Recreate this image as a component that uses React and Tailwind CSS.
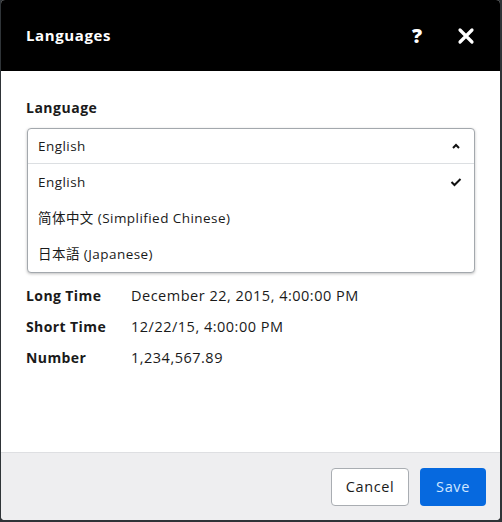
import React from 'react';

const font = { fontFamily: '"Open Sans", "Noto Sans CJK SC", sans-serif' };

const options = [
  { label: 'English', selected: true },
  { label: '简体中文 (Simplified Chinese)' },
  { label: '日本語 (Japanese)' },
];

const details = [
  ['Long Time', 'December 22, 2015, 4:00:00 PM'],
  ['Short Time', '12/22/15, 4:00:00 PM'],
  ['Number', '1,234,567.89'],
];

export default function App() {
  return (
    <div className="w-[502px] h-[522px] bg-[#2f3438] pl-[1px] pr-[2px] pb-[2px]" style={font}>
      <div className="flex flex-col h-full rounded-[4px] overflow-hidden bg-white">
        {/* Header */}
        <div className="h-[71px] shrink-0 bg-black flex items-center pl-[25px] pr-[22px]">
          <h2 className="text-white text-[15px] font-bold tracking-[0.6px] flex-1">Languages</h2>
          <button className="text-white text-[20px] font-extrabold leading-none w-[24px] mr-[25px]" aria-label="Help">?</button>
          <button className="text-white w-[24px] h-[24px] flex items-center justify-center" aria-label="Close">
            <svg width="18" height="18" viewBox="0 0 18 18">
              <path d="M3 3 L15 15 M15 3 L3 15" stroke="white" strokeWidth="3.2" strokeLinecap="round" />
            </svg>
          </button>
        </div>

        {/* Body */}
        <div className="flex-1 px-[25px] pt-[28px] text-[#1a1a1a]">
          <label className="block text-[14px] font-bold tracking-[0.5px] leading-[18px] mb-[11px]">Language</label>
          <div className="ml-[1px] border border-[#a3a8ad] rounded-[4px] shadow-[0_1px_3px_rgba(0,0,0,0.25)] bg-white">
            <div className="h-[35px] flex items-center pl-[10px] pr-[11px] border-b border-[#dcdfe2] text-[13.5px] tracking-[0.45px]">
              <span className="flex-1">English</span>
              <svg width="10" height="8" viewBox="0 0 10 8" className="mr-[2px]">
                <path d="M2 6 L5 3 L8 6" fill="none" stroke="#111" strokeWidth="2" />
              </svg>
            </div>
            {options.map((o) => (
              <div key={o.label} className="h-[36px] flex items-center pl-[10px] pr-[11px] text-[13.5px] tracking-[0.45px]">
                <span className="flex-1">{o.label}</span>
                {o.selected && (
                  <svg width="12" height="10" viewBox="0 0 12 10" className="mr-[1px]">
                    <path d="M1.5 5 L4.5 8 L10.5 2" fill="none" stroke="#111" strokeWidth="2" />
                  </svg>
                )}
              </div>
            ))}
          </div>
          <div className="mt-[7px]">
            {details.map(([k, v]) => (
              <div key={k} className="h-[31px] flex items-center text-[14.5px]">
                <span className="w-[105px] text-[14px] font-bold tracking-[0.4px]">{k}</span>
                <span className="tracking-[0.5px]">{v}</span>
              </div>
            ))}
          </div>
        </div>

        {/* Footer */}
        <div className="h-[68px] shrink-0 bg-[#eeeef0] border-t border-[#dedfe2] flex items-start justify-end gap-[11px] pt-[15px] pr-[14px]">
          <button className="w-[78px] h-[38px] rounded-[4px] border border-[#a9adb2] bg-white text-[14.5px] tracking-[0.6px] text-[#1a1a1a]">Cancel</button>
          <button className="w-[66px] h-[38px] rounded-[4px] bg-[#0669df] text-[14.5px] tracking-[0.6px] text-[#cfe6ff]">Save</button>
        </div>
      </div>
    </div>
  );
}
